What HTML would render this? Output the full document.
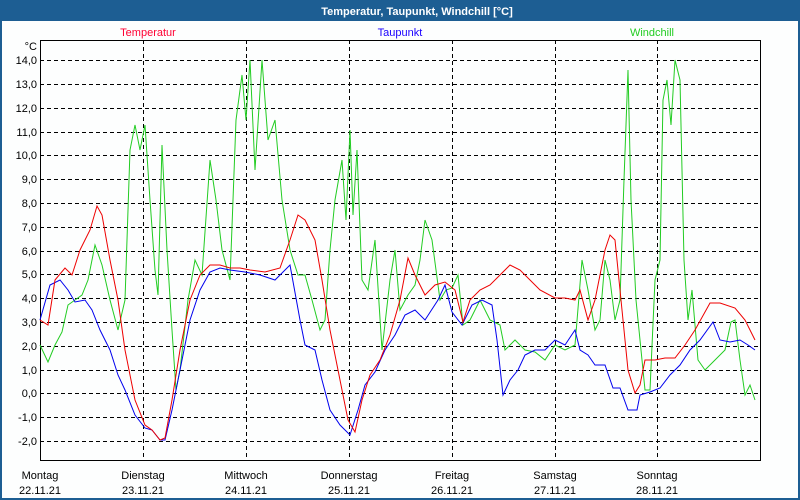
<!DOCTYPE html>
<html><head><meta charset="utf-8"><style>
html,body{margin:0;padding:0;width:800px;height:500px;overflow:hidden;background:#fff}
svg{display:block}
text{font-family:"Liberation Sans","DejaVu Sans",sans-serif;font-size:11px}
</style></head><body>
<svg width="800" height="500" xmlns="http://www.w3.org/2000/svg">
<rect x="0" y="0" width="800" height="500" fill="#fdfefe"/>
<rect x="0" y="0" width="800" height="21" fill="#1d5e93"/>
<rect x="0" y="0" width="2" height="500" fill="#1d5e93"/>
<rect x="798" y="0" width="2" height="500" fill="#1d5e93"/>
<rect x="0" y="498" width="800" height="2" fill="#1d5e93"/>
<text x="417" y="15" fill="#fff" font-weight="bold" font-size="12" text-anchor="middle">Temperatur, Taupunkt, Windchill [°C]</text>
<text x="148" y="36" fill="#ff0033" text-anchor="middle">Temperatur</text>
<text x="400" y="36" fill="#1a00ff" text-anchor="middle">Taupunkt</text>
<text x="652" y="36" fill="#22cc22" text-anchor="middle">Windchill</text>
<text x="37" y="50" text-anchor="end" fill="#000">°C</text>
<g stroke="#000" stroke-width="1" stroke-dasharray="4,3" fill="none">
<path d="M40 60.5H760M40 84.5H760M40 108.5H760M40 132.5H760M40 155.5H760M40 179.5H760M40 203.5H760M40 227.5H760M40 251.5H760M40 274.5H760M40 298.5H760M40 322.5H760M40 346.5H760M40 370.5H760M40 393.5H760M40 417.5H760M40 441.5H760"/>
<path d="M143.5 40V460M246.5 40V460M349.5 40V460M452.5 40V460M555.5 40V460M657.5 40V460"/>
</g>
<rect x="40.5" y="40.5" width="720" height="420" fill="none" stroke="#000"/>
<g fill="#000" text-anchor="end">
<text x="37" y="64">14,0</text><text x="37" y="88">13,0</text><text x="37" y="112">12,0</text><text x="37" y="136">11,0</text><text x="37" y="159">10,0</text><text x="37" y="183">9,0</text><text x="37" y="207">8,0</text><text x="37" y="231">7,0</text><text x="37" y="255">6,0</text><text x="37" y="278">5,0</text><text x="37" y="302">4,0</text><text x="37" y="326">3,0</text><text x="37" y="350">2,0</text><text x="37" y="374">1,0</text><text x="37" y="397">0,0</text><text x="37" y="421">-1,0</text><text x="37" y="445">-2,0</text>
</g>
<g fill="#000" text-anchor="middle">
<text x="40" y="479">Montag</text><text x="40" y="494">22.11.21</text>
<text x="143" y="479">Dienstag</text><text x="143" y="494">23.11.21</text>
<text x="246" y="479">Mittwoch</text><text x="246" y="494">24.11.21</text>
<text x="349" y="479">Donnerstag</text><text x="349" y="494">25.11.21</text>
<text x="452" y="479">Freitag</text><text x="452" y="494">26.11.21</text>
<text x="555" y="479">Samstag</text><text x="555" y="494">27.11.21</text>
<text x="657" y="479">Sonntag</text><text x="657" y="494">28.11.21</text>
</g>
<g fill="none" stroke-width="1">
<polyline stroke="#22cc22" points="40,345 48,362 55,345 62,332 68,305 75,300 82,295 88,280 95,245 102,265 110,300 118,330 125,300 130,150 135,125 140,150 145,125 150,200 155,270 158,295 162,145 167,250 172,330 176,390 180,370 188,300 195,260 202,275 210,160 216,200 222,250 230,280 236,120 242,75 246,120 250,60 255,170 262,60 268,140 275,120 282,200 290,250 298,275 305,275 312,300 320,330 325,320 330,250 335,200 342,160 346,220 350,130 353,215 357,150 362,280 368,290 375,240 382,350 390,280 395,250 400,310 408,295 415,285 420,260 425,220 432,240 440,300 446,290 452,288 458,275 463,325 470,320 480,300 490,320 500,325 505,350 515,340 525,350 535,352 545,360 555,345 565,350 575,345 582,260 588,290 595,330 600,320 605,260 610,280 615,320 620,300 624,180 628,70 631,200 636,300 640,340 645,390 650,390 655,280 660,260 663,100 667,80 671,125 675,60 680,80 684,260 688,320 692,290 698,360 705,370 715,360 725,350 731,322 735,320 740,360 745,395 750,385 755,400"/>
<polyline stroke="#0000ee" points="40,320 50,285 60,280 68,290 75,302 85,300 92,310 100,330 110,350 118,375 125,390 135,415 145,428 152,430 160,440 165,440 172,410 180,370 190,320 200,290 210,272 220,268 230,270 245,272 260,275 275,280 290,265 300,320 305,345 315,350 322,380 330,410 340,425 350,435 358,410 365,385 375,372 385,350 395,335 405,315 415,310 425,320 438,300 445,285 452,312 462,325 472,305 482,300 492,305 497,340 503,395 510,380 518,370 525,355 535,350 545,350 555,340 565,345 575,330 580,350 588,355 595,365 605,365 613,388 620,388 628,410 637,410 640,395 650,392 660,388 670,375 680,365 690,350 700,340 713,322 720,340 730,342 740,340 748,345 755,350"/>
<polyline stroke="#ee0000" points="40,320 48,325 55,280 65,268 72,275 80,250 90,230 97,206 102,215 110,260 118,300 125,350 135,400 145,425 152,430 160,440 165,438 172,400 180,350 190,300 200,275 210,265 220,265 230,268 240,268 250,270 265,272 280,268 290,240 298,215 305,220 315,240 322,280 330,330 340,380 348,420 355,432 362,400 370,375 380,360 390,335 400,300 408,258 415,275 425,295 435,285 445,282 455,290 463,322 470,300 480,290 490,285 500,275 510,265 520,270 530,280 540,290 555,298 565,298 575,300 580,290 588,320 595,300 605,250 610,235 615,240 620,290 628,370 635,393 640,385 645,360 655,360 665,358 675,358 685,345 695,330 710,303 720,303 735,308 745,320 750,330 755,340"/>
</g>
</svg>
</body></html>
